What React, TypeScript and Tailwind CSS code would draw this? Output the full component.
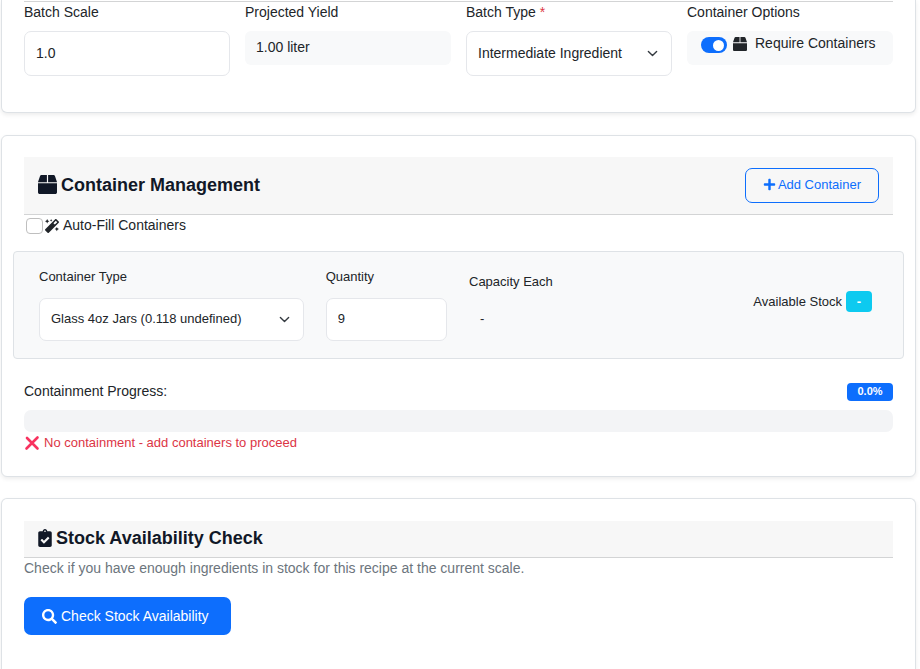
import type { ReactNode } from "react";
import { FaBox, FaClipboardCheck, FaMagic, FaPlus, FaSearch } from "react-icons/fa";

const field =
  "block w-full rounded-[7px] border border-[#e5e7eb] bg-white px-[11px] text-[#212529] outline-none focus:border-[#86b7fe]";

function Card({ children, className = "" }: { children: ReactNode; className?: string }) {
  return (
    <section
      className={`border border-[#dee2e6] bg-white px-[22px] shadow-[0_2px_4px_rgba(0,0,0,0.075)] ${className}`}
    >
      {children}
    </section>
  );
}

function CardTitle({ children }: { children: ReactNode }) {
  return (
    <h2 className="flex items-center gap-1 pb-[2px] text-[18px] leading-[20px] font-bold text-[#111827]">
      {children}
    </h2>
  );
}

function SelectBox({ id, value, className }: { id: string; value: string; className: string }) {
  return (
    <div className="relative">
      <select id={id} className={`${field} appearance-none pr-8 ${className}`} defaultValue={value}>
        <option>{value}</option>
      </select>
      <svg
        viewBox="0 0 16 16"
        aria-hidden="true"
        className="pointer-events-none absolute inset-y-0 right-[14px] my-auto size-[11px]"
        fill="none"
        stroke="#343a40"
        strokeWidth="2"
        strokeLinecap="round"
        strokeLinejoin="round"
      >
        <path d="m2 5 6 6 6-6" />
      </svg>
    </div>
  );
}

function BatchSettings() {
  return (
    <Card className="rounded-b-[6px] border-t-0 pt-px pb-9">
      <div className="grid grid-cols-4 gap-[15px] border-t border-[#d3d4d5]">
        <div>
          <label htmlFor="scale" className="mb-2 block">
            Batch Scale
          </label>
          <input id="scale" defaultValue="1.0" className={`${field} h-[45px] pb-[2px]`} />
        </div>
        <div>
          <div className="mb-2">Projected Yield</div>
          <div className="h-[34px] rounded-[6px] bg-[#f8f9fa] px-[11px] py-[6px]">1.00 liter</div>
        </div>
        <div>
          <label htmlFor="type" className="mb-2 block">
            Batch Type <span className="text-[#dc3545]">*</span>
          </label>
          <SelectBox id="type" value="Intermediate Ingredient" className="h-[45px]" />
        </div>
        <div>
          <div className="mb-2">Container Options</div>
          <div className="flex h-[34px] items-start rounded-[6px] bg-[#f8f9fa] pt-[2px] pl-[14px]">
            <input
              id="require"
              type="checkbox"
              role="switch"
              defaultChecked
              className="mt-1 flex h-4 w-[26px] shrink-0 appearance-none items-center rounded-full bg-[#adb5bd] px-[3px] before:size-[11px] before:rounded-full before:bg-white checked:justify-end checked:bg-[#0d6efd]"
            />
            <label htmlFor="require" className="ml-[6px] flex items-center gap-2 whitespace-nowrap">
              <FaBox className="size-[14px]" />
              Require Containers
            </label>
          </div>
        </div>
      </div>
    </Card>
  );
}

function ContainerManagement() {
  return (
    <Card className="mt-[22px] rounded-[6px] pt-[21px] pb-[23px]">
      <div className="flex items-center justify-between border-b border-[#d3d4d5] bg-[#f7f7f7] px-[14px] py-[11px]">
        <CardTitle>
          <FaBox className="size-[19px]" />
          Container Management
        </CardTitle>
        <button
          type="button"
          className="flex h-[35px] items-center gap-[2px] rounded-[7px] border border-[#0d6efd] px-[17px] pb-[2px] text-[13px] text-[#0d6efd]"
        >
          <FaPlus className="size-[13px]" />
          Add Container
        </button>
      </div>
      <div className="flex items-center">
        <input
          id="autofill"
          type="checkbox"
          className="ml-[2px] h-4 w-[17px] appearance-none rounded-[4px] border border-[#bfbfbf] bg-white checked:bg-[#0d6efd]"
        />
        <label htmlFor="autofill" className="ml-[2px] flex items-center gap-1">
          <FaMagic className="size-[14px]" />
          Auto-Fill Containers
        </label>
      </div>

      <div className="-mx-[11px] mt-[15px] grid grid-cols-12 gap-x-[22px] rounded-[4px] border border-[#dee2e6] bg-[#f8f9fa] pt-[14px] pr-[26px] pb-[17px] pl-[25px] text-[13px]">
        <div className="col-span-4">
          <label htmlFor="ctype" className="mb-[11px] block">
            Container Type
          </label>
          <SelectBox id="ctype" value="Glass 4oz Jars (0.118 undefined)" className="h-[43px] pb-[2px]" />
        </div>
        <div className="col-span-2">
          <label htmlFor="qty" className="mb-[11px] block">
            Quantity
          </label>
          <input id="qty" defaultValue="9" className={`${field} h-[43px] pb-[2px]`} />
        </div>
        <div className="col-span-2 pt-[5px]">
          <div className="mb-4">Capacity Each</div>
          <div className="px-[11px]">-</div>
        </div>
        <div className="col-span-4 flex items-center justify-end gap-1 pr-[5px] pb-[5px]">
          <span>Available Stock</span>
          <span className="flex h-[21px] w-[26px] items-center justify-center rounded-[4px] bg-[#0dcaf0] font-bold text-white">
            -
          </span>
        </div>
      </div>

      <div className="mt-[22px] flex items-center justify-between">
        <span>Containment Progress:</span>
        <span className="flex h-[18px] w-[46px] items-center justify-center rounded-[4px] bg-[#0d6efd] text-[11px] font-bold text-white">
          0.0%
        </span>
      </div>
      <div
        role="progressbar"
        aria-valuenow={0}
        aria-label="Containment Progress"
        className="mt-2 h-[22px] rounded-[7px] bg-[#f3f4f6]"
      />
      <div className="flex items-center gap-1 text-[13px] text-[#dc3545]">
        <svg viewBox="0 0 16 16" className="size-4" aria-hidden="true">
          <path d="M3 3l10.5 10.5M13.5 2.500L2.500 13.500" stroke="#f8325f" strokeWidth="2.600" strokeLinecap="round" />
        </svg>
        No containment - add containers to proceed
      </div>
    </Card>
  );
}

function StockCheck() {
  return (
    <Card className="mt-[21px] grow rounded-t-[6px] border-b-0 pt-[22px] pb-6">
      <div className="border-b border-[#d3d4d5] bg-[#f7f7f7] px-[14px] py-[7px]">
        <CardTitle>
          <FaClipboardCheck className="h-[18px] w-[14px]" />
          Stock Availability Check
        </CardTitle>
      </div>
      <p className="text-[#6c757d]">
        Check if you have enough ingredients in stock for this recipe at the current scale.
      </p>
      <button
        type="button"
        className="mt-[18px] flex h-[38px] items-center gap-1 rounded-[7px] bg-[#0d6efd] pr-[22px] pl-[18px] text-white"
      >
        <FaSearch className="size-[15px]" />
        Check Stock Availability
      </button>
    </Card>
  );
}

export default function App() {
  return (
    <main className="flex min-h-screen flex-col bg-white pr-1 pl-px font-['Liberation_Sans',Arial,sans-serif] text-[14px] leading-[21px] text-[#212529]">
      <BatchSettings />
      <ContainerManagement />
      <StockCheck />
    </main>
  );
}
